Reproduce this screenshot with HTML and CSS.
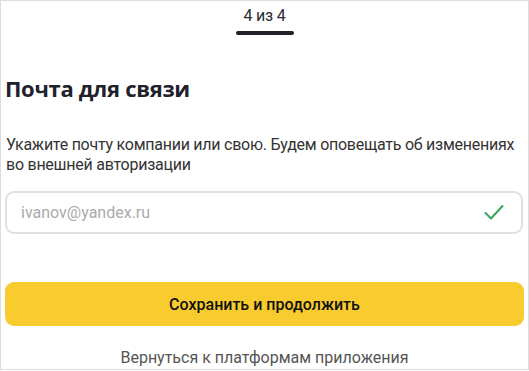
FILE: index.html
```html
<!DOCTYPE html>
<html lang="ru">
<head>
<meta charset="utf-8">
<link rel="stylesheet" href="styles.css">
</head>
<body>
<div class="page">
  <div class="stepper">
    <div class="step-label">4 из 4</div>
    <div class="step-bar"></div>
  </div>
  <h1 class="title">Почта для связи</h1>
  <p class="desc">Укажите почту компании или свою. Будем оповещать об изменениях во внешней авторизации</p>
  <div class="field">
    <span class="placeholder">ivanov@yandex.ru</span>
    <svg class="check" width="20" height="17" viewBox="0 0 20 17"><path d="M1.5 9 L7 14.5 L18.5 2" fill="none" stroke="#3aa35c" stroke-width="2" stroke-linecap="round" stroke-linejoin="round"/></svg>
  </div>
  <button class="primary">Сохранить и продолжить</button>
  <div class="back">Вернуться к платформам приложения</div>
</div>
</body>
</html>
```
FILE: styles.css
```css
html, body {
  margin: 0;
  padding: 0;
  background: #fff;
}
body {
  font-family: Roboto, "Noto Sans", sans-serif;
  color: #222;
}
.page {
  box-sizing: border-box;
  width: 529px;
  height: 370px;
  border: 1px solid #dcdcdc;
  padding: 0 4px 0 4px;
  display: flex;
  flex-direction: column;
  overflow: hidden;
}
.stepper {
  display: flex;
  flex-direction: column;
  align-items: center;
  padding-top: 5px;
}
.step-label {
  font-size: 16px;
  line-height: 20px;
  color: #2b2b33;
  letter-spacing: -0.2px;
}
.step-bar {
  margin-top: 5px;
  width: 58px;
  height: 4px;
  border-radius: 2px;
  background: #21212b;
}
.title {
  margin: 38px 0 0 0;
  font-family: "Open Sans", sans-serif;
  font-size: 22px;
  line-height: 30px;
  font-weight: 700;
  letter-spacing: -0.3px;
  color: #21212b;
}
.desc {
  margin: 32px 0 0 1px;
  font-size: 16px;
  line-height: 20px;
  letter-spacing: -0.25px;
  color: #333;
}
.field {
  margin-top: 16px;
  box-sizing: border-box;
  height: 43px;
  margin-right: 1px;
  border: 2px solid #e0e0e0;
  border-radius: 9px;
  display: flex;
  align-items: center;
  justify-content: space-between;
  padding: 0 17px 0 14px;
}
.placeholder {
  font-size: 16px;
  color: #aaa;
}
.check {
  display: block;
}
.primary {
  margin-top: 48px;
  height: 44px;
  border: none;
  border-radius: 9px;
  background: #f8cb2f;
  font-family: inherit;
  font-size: 16px;
  font-weight: 500;
  color: #111;
}
.back {
  margin-top: 22px;
  text-align: center;
  font-size: 16px;
  line-height: 20px;
  color: #555;
}
```
